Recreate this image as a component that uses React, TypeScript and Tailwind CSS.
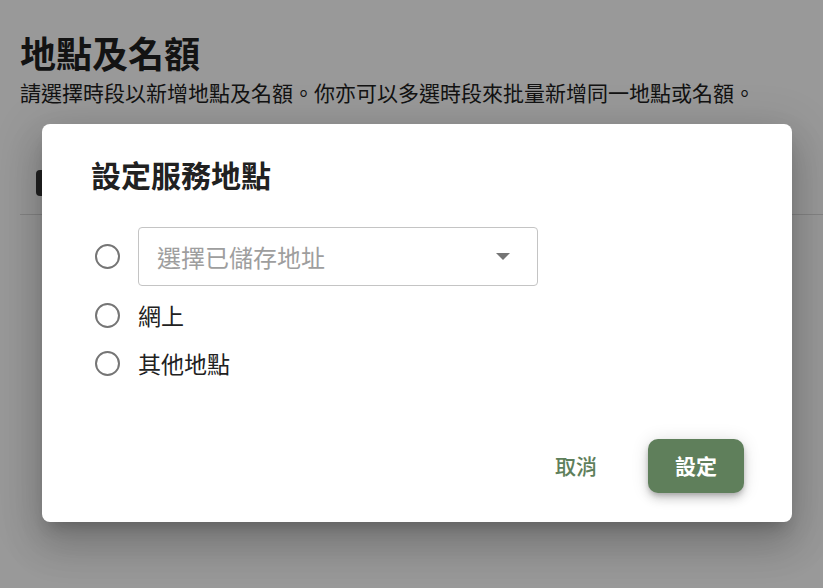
import { useState } from "react";

const font = { fontFamily: '"Noto Sans CJK TC", "Noto Sans", sans-serif' };

const Radio = ({ checked, onClick }: { checked: boolean; onClick: () => void }) => (
  <button
    onClick={onClick}
    className="h-[25px] w-[25px] rounded-full border-2 border-[#757575] flex items-center justify-center shrink-0"
  >
    {checked && <span className="h-[12px] w-[12px] rounded-full bg-[#5f7f5b]" />}
  </button>
);

const App = () => {
  const [choice, setChoice] = useState<number | null>(null);

  return (
    <div className="relative h-[588px] w-full overflow-hidden bg-white text-[#212121]" style={font}>
      {/* Page behind the dialog */}
      <div className="pt-[28px]">
        <h1 className="px-5 text-[36px] font-bold leading-[48px]">地點及名額</h1>
        <p className="px-5 text-[21px] leading-[28px] mt-[2px]">
          請選擇時段以新增地點及名額。你亦可以多選時段來批量新增同一地點或名額。
        </p>
        <div className="mt-[64px] px-9">
          <div className="h-[26px] w-[60px] rounded bg-[#3a3a3a]" />
        </div>
        <div className="ml-5 mt-[18px] border-t border-[#ddd]" />
      </div>

      {/* Overlay */}
      <div className="absolute inset-0 bg-black/40" />

      {/* Dialog */}
      <div className="absolute left-[42px] top-[124px] w-[750px] h-[398px] rounded-lg bg-white shadow-[0_11px_15px_-7px_rgba(0,0,0,0.2),0_24px_38px_3px_rgba(0,0,0,0.14),0_9px_46px_8px_rgba(0,0,0,0.12)] flex flex-col">
        <h2 className="pl-[49px] pt-[30px] text-[30px] font-bold leading-[40px] text-[#212121]">設定服務地點</h2>

        <div className="pl-[53px] pt-[33px] flex flex-col">
          <div className="flex items-center gap-[18px]">
            <Radio checked={choice === 0} onClick={() => setChoice(0)} />
            <div className="h-[59px] w-[400px] rounded border border-[#c4c4c4] flex items-center justify-between pl-[18px] pr-[27px]">
              <span className="text-[24px] text-[#9e9e9e]">選擇已儲存地址</span>
              <svg width="14" height="7" viewBox="0 0 14 7">
                <path d="M0 0 L14 0 L7 7 Z" fill="#757575" />
              </svg>
            </div>
          </div>
          <div className="flex items-center gap-[18px] mt-[5px] h-[48px]">
            <Radio checked={choice === 1} onClick={() => setChoice(1)} />
            <span className="text-[23px]">網上</span>
          </div>
          <div className="flex items-center gap-[18px] h-[48px]">
            <Radio checked={choice === 2} onClick={() => setChoice(2)} />
            <span className="text-[23px]">其他地點</span>
          </div>
        </div>

        <div className="mt-auto flex items-center justify-end gap-[39px] pr-[48px] pb-[29px]">
          <button className="px-3 h-[54px] text-[21px] text-[#5f7f5b] font-medium">取消</button>
          <button className="h-[54px] w-[96px] rounded-[10px] bg-[#5f7f5b] text-white text-[21px] font-bold shadow-[0_3px_5px_-1px_rgba(0,0,0,0.2),0_6px_10px_0_rgba(0,0,0,0.14),0_1px_18px_0_rgba(0,0,0,0.12)]">
            設定
          </button>
        </div>
      </div>
    </div>
  );
};

export default App;
